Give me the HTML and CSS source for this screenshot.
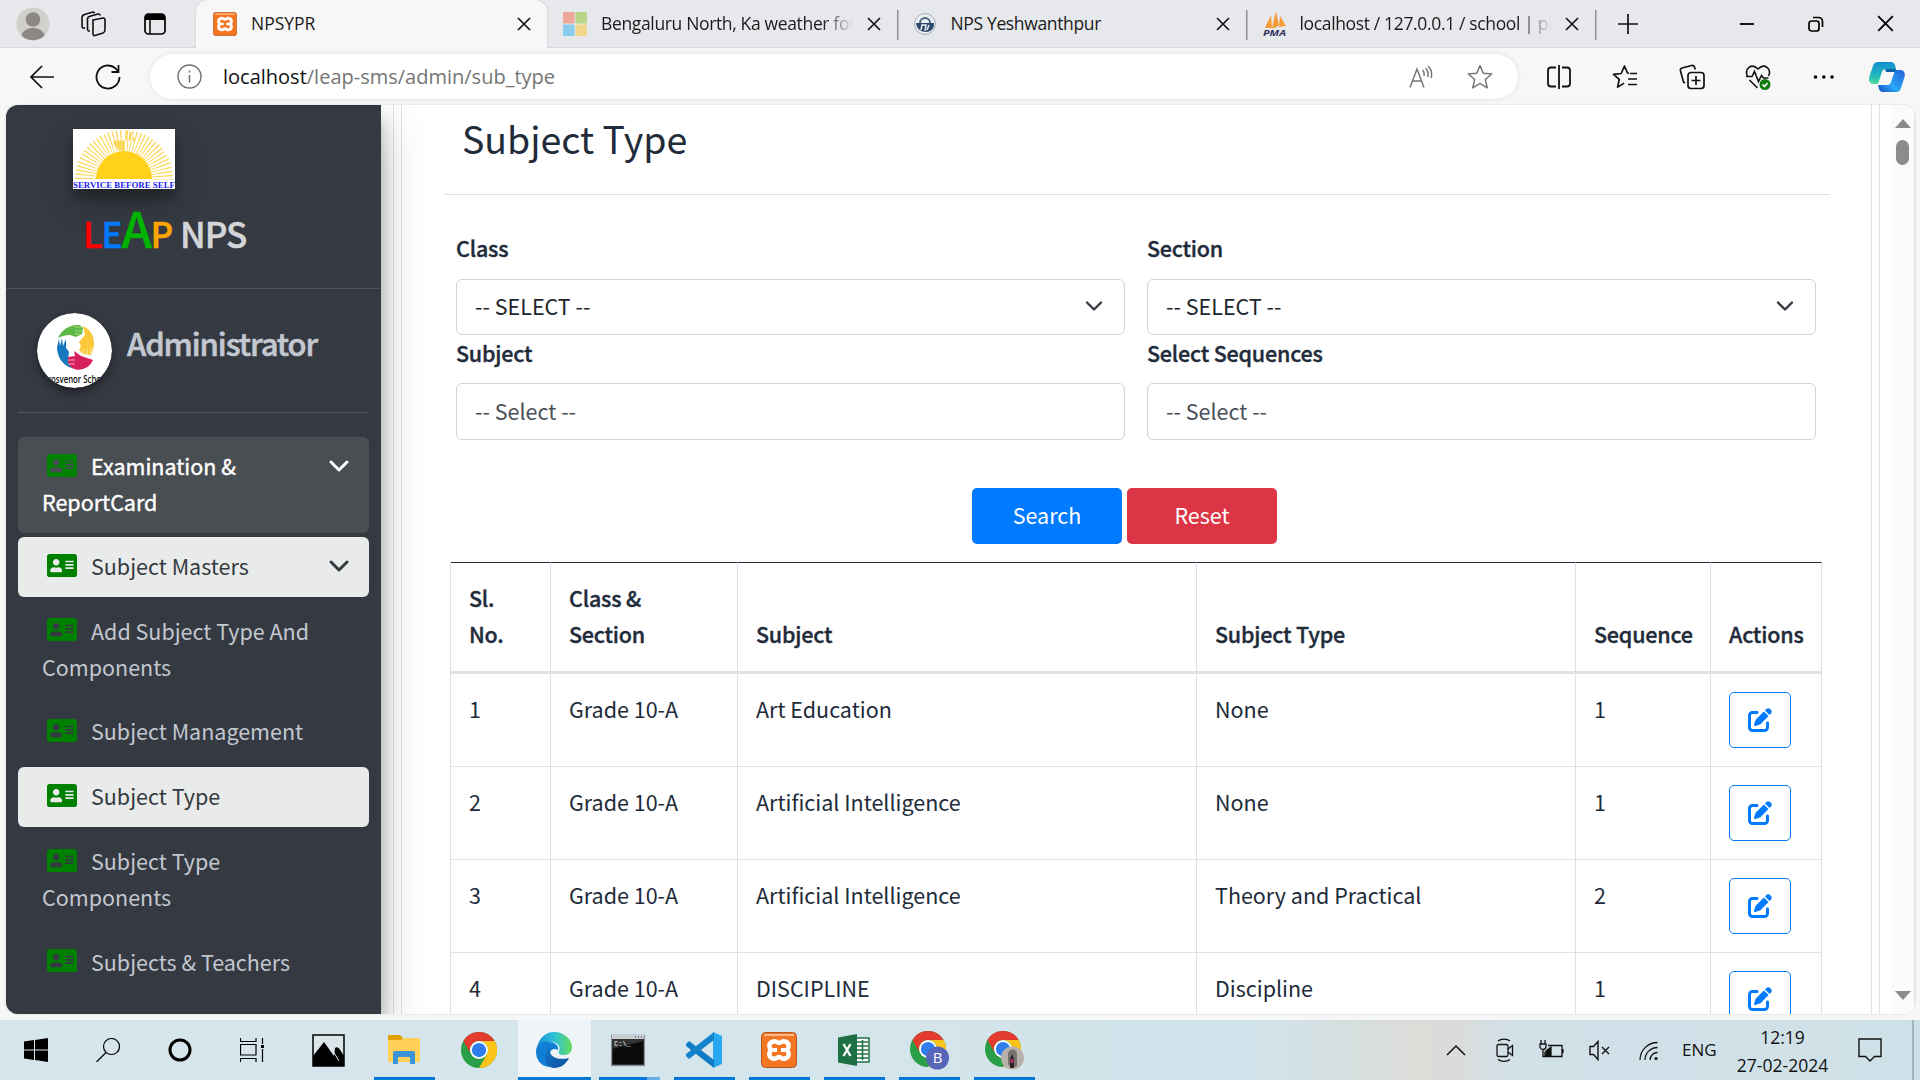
FILE: index.html
```html
<!DOCTYPE html>
<html lang="en">
<head>
<meta charset="utf-8">
<title>NPSYPR</title>
<link rel="stylesheet" href="styles.css">
</head>
<body>
<svg class="defs" width="0" height="0">
  <symbol id="card" viewBox="0 32 576 448"><path d="M528 32H48C21.500 32 0 53.500 0 80v352c0 26.500 21.500 48 48 48h480c26.500 0 48-21.500 48-48V80c0-26.500-21.500-48-48-48zm-352 96c35.300 0 64 28.700 64 64s-28.700 64-64 64-64-28.700-64-64 28.700-64 64-64zm112 236.800c0 10.600-10 19.200-22.400 19.200H86.400C74 384 64 375.400 64 364.800v-19.200c0-31.800 30.100-57.600 67.200-57.600h5c12.300 5.100 25.700 8 39.800 8s27.600-2.900 39.800-8h5c37.100 0 67.200 25.800 67.200 57.600v19.200zM512 312c0 4.400-3.600 8-8 8H360c-4.400 0-8-3.600-8-8v-16c0-4.400 3.600-8 8-8h144c4.400 0 8 3.600 8 8v16zm0-64c0 4.400-3.600 8-8 8H360c-4.400 0-8-3.600-8-8v-16c0-4.400 3.600-8 8-8h144c4.400 0 8 3.600 8 8v16zm0-64c0 4.400-3.600 8-8 8H360c-4.400 0-8-3.600-8-8v-16c0-4.400 3.600-8 8-8h144c4.400 0 8 3.600 8 8v16z" fill="#008000"/></symbol>
  <symbol id="edit" viewBox="0 0 512 512"><path fill="#007bff" d="M471.600 21.700c-21.900-21.900-57.300-21.900-79.200 0L362.300 51.700l97.900 97.900 30.100-30.100c21.900-21.900 21.900-57.300 0-79.200L471.600 21.700zm-299.200 220c-6.100 6.100-10.800 13.600-13.500 21.900l-29.600 88.800c-2.900 8.600-.6 18.100 5.800 24.600s15.900 8.700 24.600 5.800l88.800-29.600c8.200-2.700 15.700-7.400 21.900-13.500L437.700 172.300 339.700 74.300 172.400 241.700zM96 64C43 64 0 107 0 160V416c0 53 43 96 96 96H352c53 0 96-43 96-96V320c0-17.700-14.300-32-32-32s-32 14.300-32 32v96c0 17.700-14.300 32-32 32H96c-17.700 0-32-14.300-32-32V160c0-17.700 14.300-32 32-32h96c17.700 0 32-14.300 32-32s-14.300-32-32-32H96z"/></symbol>
  <symbol id="chev" viewBox="0 0 20 12"><path d="M2 2l8 8 8-8" fill="none" stroke="currentColor" stroke-width="3" stroke-linecap="round" stroke-linejoin="round"/></symbol>
  <symbol id="caret" viewBox="0 0 18 12"><path d="M2 2.500l7 7 7-7" fill="none" stroke="#343a40" stroke-width="2.400" stroke-linecap="round" stroke-linejoin="round"/></symbol>
  <symbol id="close" viewBox="0 0 14 14"><path d="M1 1l12 12M13 1L1 13" fill="none" stroke="#111" stroke-width="1.600"/></symbol>
  <symbol id="xampp" viewBox="0 0 36 36"><rect x=".5" y=".5" width="35" height="35" rx="4" fill="#f37623" stroke="#b9541a"/><path d="M3 3h30" stroke="#ffb98a" stroke-width="2"/><path d="M12 9.500c3-1 4 1.500 6 1.500s3-2.500 6-1.500c5 1.500 4 6 2 8.500 2 2.500 3 7-2 8.500-3 1-4-1.500-6-1.500s-3 2.500-6 1.500c-5-1.500-4-6-2-8.500-2-2.500-3-7 2-8.500z" fill="none" stroke="#fff" stroke-width="4.500"/><path d="M12 18h4M20 18h4" stroke="#fff" stroke-width="4"/></symbol>
  <symbol id="chrome" viewBox="0 0 48 48"><circle cx="24" cy="24" r="24" fill="#2b9f47"/><path d="M3.200 12A24 24 0 0 1 44.800 12H24a12 12 0 0 0-10.400 18z" fill="#e33b2e"/><path d="M44.800 12A24 24 0 0 1 24 48l10.400-18A12 12 0 0 0 24 12z" fill="#fcc419"/><circle cx="24" cy="24" r="12" fill="#fff"/><circle cx="24" cy="24" r="9.500" fill="#2f7cec"/></symbol>
  <linearGradient id="edgeTop" x1="0" x2="1"><stop offset="0" stop-color="#1b8fd2"/><stop offset=".5" stop-color="#2fc1d8"/><stop offset="1" stop-color="#66dc5b"/></linearGradient>
  <linearGradient id="edgeLow" x1="0" y1="0" x2="1" y2="1"><stop offset="0" stop-color="#1277cc"/><stop offset="1" stop-color="#0f4f9c"/></linearGradient>
  <linearGradient id="cpA" x1="0" y1="0" x2="0" y2="1"><stop offset="0" stop-color="#118fd0"/><stop offset=".6" stop-color="#20b6bd"/><stop offset="1" stop-color="#4fdc9b"/></linearGradient>
  <linearGradient id="cpB" x1="1" y1="0" x2="0" y2="1"><stop offset="0" stop-color="#2461d8"/><stop offset=".6" stop-color="#2aa8f5"/><stop offset="1" stop-color="#1746c8"/></linearGradient>
</svg>

<header class="tabstrip">
  <div class="strip-left">
    <svg width="34" height="34" viewBox="0 0 34 34"><circle cx="17" cy="17" r="16.500" fill="#d2d0cd"/><circle cx="17" cy="12.500" r="7.300" fill="#8b8886"/><path d="M5.500 28.500c2-10 21-10 23 0a16.500 16.500 0 0 1-23 0z" fill="#8b8886"/></svg>
    <svg width="26" height="26" viewBox="0 0 26 26" fill="none" stroke="#111" stroke-width="1.600"><path d="M13 9l10-2c1.500 0 2 .8 2 2v10c0 1.500-.7 2.500-2 3l-8 2.500c-1.500.4-2-.5-2-2z"/><path d="M10 20c-1.600.2-2.500-.4-2.500-2V8c0-1.500 1-2.500 2.500-2.800L18 3c1.300-.2 2 .3 2.300 1.500M5 17c-1.800.3-3-.3-3-2V6.500C2 5 3 4 4.500 3.500L12 1.300c1.300-.4 2.300 0 2.700 1"/></svg>
    <svg width="22" height="22" viewBox="0 0 22 22"><rect x="1" y="1" width="20" height="20" rx="3.500" fill="none" stroke="#000" stroke-width="1.700"/><path d="M1 4a3 3 0 0 1 3-3h14a3 3 0 0 1 3 3v3H1z"/><path d="M6 7v14" stroke="#000" stroke-width="1.500"/></svg>
  </div>
  <div class="tab tab-active"><svg width="24" height="24"><use href="#xampp"/></svg><span class="tab-title">NPSYPR</span><svg class="x" width="14" height="14"><use href="#close"/></svg></div>
  <div class="tab"><svg width="24" height="24" viewBox="0 0 24 24"><path d="M0 0h11.500v11.500H0z" fill="#eba89a"/><path d="M12.500 0H24v11.500H12.500z" fill="#b9d589"/><path d="M0 12.500h11.500V24H0z" fill="#89cdee"/><path d="M12.500 12.500H24V24H12.500z" fill="#f1d68b"/></svg><span class="tab-title fade">Bengaluru North, Ka weather for</span><svg class="x" width="14" height="14"><use href="#close"/></svg></div>
  <div class="tab sep"><svg width="24" height="24" viewBox="0 0 24 24"><circle cx="12" cy="12" r="10.500" fill="#e9eef2" stroke="#a7b0ba"/><path d="M3 11h18c1 12-17 12-18 0z" fill="#2f4a6b"/><path d="M7 11a5 5 0 0 1 10 0" fill="none" stroke="#52657c" stroke-width="2"/><path d="M8 18l1-5h4l-1 6M14 18l2-5" stroke="#e9eef2" fill="none" stroke-width="1.500"/></svg><span class="tab-title">NPS Yeshwanthpur</span><svg class="x" width="14" height="14"><use href="#close"/></svg></div>
  <div class="tab sep"><svg class="pma-logo" width="26" height="30" viewBox="0 0 26 30"><path d="M3 19L9 6l1 13zM10 19L14 2l3 14-4 3zM17 18l1-11 6 10z" fill="#f89c3a"/><text x="1" y="27" class="pma" textLength="23" lengthAdjust="spacingAndGlyphs">PMA</text></svg><span class="tab-title fade">localhost / 127.0.0.1 / school | ph</span><svg class="x" width="14" height="14"><use href="#close"/></svg></div>
  <div class="newtab sep"><svg width="22" height="22" viewBox="0 0 22 22"><path d="M11 1v20M1 11h20" stroke="#111" stroke-width="1.700"/></svg></div>
  <div class="winctl">
    <svg width="16" height="16" viewBox="0 0 16 16"><path d="M1 8h14" stroke="#000" stroke-width="1.800"/></svg>
    <svg width="16" height="16" viewBox="0 0 16 16" fill="none" stroke="#000" stroke-width="1.700"><rect x="1" y="5" width="10" height="10" rx="2.500"/><path d="M5 1.500h5.500a4 4 0 0 1 4 4V11"/></svg>
    <svg width="17" height="17" viewBox="0 0 14 14"><path d="M1 1l12 12M13 1L1 13" stroke="#000" stroke-width="1.500"/></svg>
  </div>
</header>

<nav class="toolbar">
  <svg class="back" width="26" height="24" viewBox="0 0 26 24" fill="none" stroke="#111" stroke-width="1.700"><path d="M25 12H2M13 1L2 12l11 11"/></svg>
  <svg class="reload" width="26" height="26" viewBox="0 0 26 26" fill="none" stroke="#111" stroke-width="1.800"><path d="M24.500 13a11.500 11.500 0 1 1-4-8.700L23 7M23.500 1v7h-7"/></svg>
  <div class="address">
    <svg width="25" height="25" viewBox="0 0 25 25"><circle cx="12.500" cy="12.500" r="11.500" fill="none" stroke="#6e6e6e" stroke-width="1.400"/><path d="M12.500 11v7.500M12.500 6.500v2" stroke="#6e6e6e" stroke-width="1.500"/></svg>
    <span class="url"><b>localhost</b>/leap-sms/admin/sub_type</span>
    <svg width="24" height="24" viewBox="0 0 24 24" fill="none" stroke="#767676" stroke-width="1.500"><path d="M1 22.500L8 4l7 18.500M3.500 16h9M13.500 5c1.500 1.600 2 3.500 1.600 6M16.500 3c2.300 2.300 3 5.500 2.200 9M19 1c3.200 3 4.300 7 3.200 12"/></svg>
    <svg width="26" height="26" viewBox="0 0 24 24" fill="none" stroke="#767676" stroke-width="1.400" stroke-linejoin="round"><path d="M12 1.500l3 7 7.800.7-5.900 5.100 1.800 7.700-6.700-4.100L5.300 22l1.800-7.700-5.900-5.100 7.800-.7z"/></svg>
  </div>
  <div class="tools">
    <svg width="26" height="26" viewBox="0 0 26 26" fill="none" stroke="#111" stroke-width="1.800"><path d="M10 3.500H5A3 3 0 0 0 2 6.500v13a3 3 0 0 0 3 3h5M16 3.500h5a3 3 0 0 1 3 3v13a3 3 0 0 1-3 3h-5M13 1v24"/></svg>
    <svg width="26" height="26" viewBox="0 0 26 26" fill="none" stroke="#111" stroke-width="1.700" stroke-linejoin="round"><path d="M17 9.500l-1.500-.5-3-7-3.300 7.500-7.700.8 5.800 5-1.700 7.800 6.500-4M18 9.500h7M16 15h9M16 20.500h9"/></svg>
    <svg width="26" height="26" viewBox="0 0 26 26" fill="none" stroke="#111" stroke-width="1.700"><rect x="9" y="8.500" width="16" height="16" rx="3"/><path d="M17 12v9M12.500 16.500h9M6 19l-1.500-1-3-11C1 5.500 1.700 4.300 3 4L12.500 1.500c1.500-.3 2.500.4 3 1.700l.8 2.300"/></svg>
    <svg width="26" height="26" viewBox="0 0 26 26" fill="none" stroke="#111" stroke-width="1.600"><path d="M2.500 12C-1 5 6.500-1.500 13 5c6.500-6.500 14 0 10.500 7M4.500 16l8 8M1 12.500h6l2.500-5 4 10 3-6 2 2.500h5"/><circle cx="20" cy="20.500" r="5.500" fill="#107c10" stroke="none"/><path d="M17.500 20.500l2 2 3-3.500" stroke="#fff"/></svg>
    <svg width="26" height="26" viewBox="0 0 26 26"><circle cx="4.500" cy="13" r="1.800"/><circle cx="12.800" cy="13" r="1.800"/><circle cx="21" cy="13" r="1.800"/></svg>
    <svg width="36" height="32" viewBox="0 0 36 32"><path d="M9 1h13c3 0 4 2 5 7H17c-3 0-4 2-5 6l-3 9H4c-4 0-4.500-4-3.500-8L4 5c1-3 2.500-4 5-4z" fill="url(#cpA)"/><path d="M27 31H14c-3 0-4-2-5-7h9c3 0 4-2 5-6l3-9h5c4 0 5.500 3 4.500 7L32 27c-1 3-2.500 4-5 4z" fill="url(#cpB)"/><path d="M16 8h11l-1 3h-9z" fill="#0c62a8"/></svg>
  </div>
</nav>

<main class="viewport">
  <aside class="sidebar">
    <div class="brand">
      <svg class="logo" width="102" height="60" viewBox="0 0 102 60"><path d="M0 0h102v60H0z" fill="#fff"/><circle cx="51" cy="50" r="38.500" fill="none" stroke="#fbd75e" stroke-width="21" pathLength="360" stroke-dasharray="1.700 3.300"/><path d="M23 50a28 28 0 0 1 56 0z" fill="#ffd11a"/><path d="M0 50.500h102V60H0z" fill="#fff"/><text x="0" y="59.300" class="motto" textLength="102" lengthAdjust="spacingAndGlyphs">SERVICE BEFORE SELF</text></svg>
      <div class="name"><span class="l">L</span><span class="e">E</span><span class="a">A</span><span class="p">P</span> NPS</div>
    </div>
    <div class="user">
      <svg class="avatar" width="75" height="75" viewBox="0 0 75 75"><clipPath id="rd"><circle cx="37.500" cy="37.500" r="37.500"/></clipPath><circle cx="37.500" cy="37.500" r="37.500" fill="#fff"/><path d="M21 25c3-8 12-14 22-13l3 3-1 6-6 3-6-2c-4 0-8 1-12 3z" fill="#5cb947"/><path d="M38 14h7M38 18h7M38 21h6" stroke="#a8db76" stroke-width="1"/><path d="M46 13c8 3 12 12 11 20l-3 9-8-1-4-4 2-4-2-4 6-7z" fill="#fbc93a"/><path d="M46 36v6M50 36v6M54 35v6" stroke="#fff3c0" stroke-width=".8"/><path d="M20 34l2-8 1 7 2-8 1 8 3-7 0 9 3 4-1 7 4 9c-9-2-15-11-15-21z" fill="#1679be"/><path d="M31 44l7-1-1-5 7 5 12 4c-4 9-14 12-21 8l-4-5z" fill="#d71f5b"/><path d="M31 47h7M31 51h7" stroke="#f6a9c1" stroke-width="1"/><g clip-path="url(#rd)"><text x="5" y="69.500" class="school" textLength="66" lengthAdjust="spacingAndGlyphs">Grosvenor School</text></g></svg>
      <span class="role">Administrator</span>
    </div>
    <ul class="menu">
      <li class="parent"><svg class="ic"><use href="#card"/></svg>Examination &amp; ReportCard<svg class="arrow"><use href="#chev"/></svg></li>
      <li class="on"><svg class="ic"><use href="#card"/></svg>Subject Masters<svg class="arrow"><use href="#chev"/></svg></li>
      <li><svg class="ic"><use href="#card"/></svg>Add Subject Type And Components</li>
      <li><svg class="ic"><use href="#card"/></svg>Subject Management</li>
      <li class="on"><svg class="ic"><use href="#card"/></svg>Subject Type</li>
      <li><svg class="ic"><use href="#card"/></svg>Subject Type<br>Components</li>
      <li><svg class="ic"><use href="#card"/></svg>Subjects &amp; Teachers</li>
    </ul>
  </aside>
  <div class="content">
    <section class="panel">
      <h1>Subject Type</h1>
      <form class="filters">
        <div><label>Class</label><div class="field sel">-- SELECT --<svg width="18" height="12"><use href="#caret"/></svg></div></div>
        <div><label>Section</label><div class="field sel">-- SELECT --<svg width="18" height="12"><use href="#caret"/></svg></div></div>
        <div><label>Subject</label><div class="field multi">-- Select --</div></div>
        <div><label>Select Sequences</label><div class="field multi">-- Select --</div></div>
      </form>
      <div class="buttons"><span class="btn blue">Search</span><span class="btn red">Reset</span></div>
      <table>
        <colgroup><col class="c1"><col class="c2"><col class="c3"><col class="c4"><col class="c5"><col class="c6"></colgroup>
        <thead><tr><th>Sl.<br>No.</th><th>Class &amp;<br>Section</th><th>Subject</th><th>Subject Type</th><th>Sequence</th><th>Actions</th></tr></thead>
        <tbody>
          <tr><td>1</td><td>Grade 10-A</td><td>Art Education</td><td>None</td><td>1</td><td><span class="act"><svg width="24" height="24"><use href="#edit"/></svg></span></td></tr>
          <tr><td>2</td><td>Grade 10-A</td><td>Artificial Intelligence</td><td>None</td><td>1</td><td><span class="act"><svg width="24" height="24"><use href="#edit"/></svg></span></td></tr>
          <tr><td>3</td><td>Grade 10-A</td><td>Artificial Intelligence</td><td>Theory and Practical</td><td>2</td><td><span class="act"><svg width="24" height="24"><use href="#edit"/></svg></span></td></tr>
          <tr><td>4</td><td>Grade 10-A</td><td>DISCIPLINE</td><td>Discipline</td><td>1</td><td><span class="act"><svg width="24" height="24"><use href="#edit"/></svg></span></td></tr>
        </tbody>
      </table>
    </section>
  </div>
  <div class="scrollbar">
    <svg width="16" height="9" viewBox="0 0 16 9"><path d="M8 0l8 9H0z" fill="#8b8b8b"/></svg>
    <i class="thumb"></i>
    <svg class="down" width="16" height="9" viewBox="0 0 16 9"><path d="M0 0h16L8 9z" fill="#8b8b8b"/></svg>
  </div>
</main>

<footer class="taskbar">
  <div class="sys">
    <svg width="24" height="24" viewBox="0 0 24 24"><path d="M0 3.500l10-1.400v9.400H0zM11 2l13-2v11.500H11zM0 12.500h10v9.400L0 20.500zM11 12.500h13V24l-13-2z"/></svg>
    <svg width="24" height="24" viewBox="0 0 24 24" fill="none" stroke="#000" stroke-width="1.200"><circle cx="15.500" cy="8.500" r="8"/><path d="M10 14.500L.5 24"/></svg>
    <svg width="24" height="24" viewBox="0 0 24 24"><circle cx="12" cy="12" r="10" fill="none" stroke="#000" stroke-width="3"/></svg>
    <svg width="24" height="24" viewBox="0 0 24 24" fill="none" stroke="#000" stroke-width="1.200"><path d="M.5 0v3.500h15.500V0M.5 24v-3.500h15.500V24M.5 6.500h15.500v10.500H.500zM22.500 0v6M22.500 11v13"/><path d="M21 7h3v3h-3z" fill="#000" stroke="none"/></svg>
  </div>
  <div class="apps">
    <div class="app plain"><svg width="33" height="33" viewBox="0 0 33 33"><path d="M1 1h31v31H1z" fill="#dbe6ea" stroke="#000" stroke-width="1.500"/><path d="M1 22L12 8l10 14 1-8c3-3 6 3 9 8v10H1z"/><path d="M21 17l6 10" stroke="#dbe6ea"/></svg></div>
    <div class="app run"><svg width="32" height="32" viewBox="0 0 32 32"><path d="M0 1h12l3 3-3 6H0z" fill="#dfa000"/><path d="M0 6h13l3-2h16v22a2 2 0 0 1-2 2H2a2 2 0 0 1-2-2z" fill="#ffd257"/><path d="M5 30V19a2 2 0 0 1 2-2h18a2 2 0 0 1 2 2v11h-5v-7H10v7z" fill="#3b94da"/></svg></div>
    <div class="app"><svg width="36" height="36"><use href="#chrome"/></svg></div>
    <div class="app run active"><svg width="36" height="36" viewBox="0 0 36 36"><path d="M1 17C2 6 10 0 18 0c11 0 18 8 18 15 0 6-4 8-8 8-5 0-6-2-5-4 2-4-1-9-9-9S2 14 1 17z" fill="url(#edgeTop)"/><path d="M0 19c0-7 7-10 13-9 6 0 10 4 9 8-6-3-9 2-8 6 1 7 8 9 14 8-4 4-28 8-28-13z" fill="#0f7fd6"/><path d="M14 15c-2 9 6 14 19 11-3 6-8 10-15 10-9-1-13-14-4-21z" fill="url(#edgeLow)"/></svg></div>
    <div class="app run stack"><svg width="34" height="36" viewBox="0 0 34 36"><path d="M.5 3.500h33v30H.500z" fill="#0a0a0a" stroke="#8a8f94" stroke-width="1.500"/><path d="M1 3h32v4H1z" fill="#c9ced2"/><path d="M24 5h1M27 5h1M30 5h1" stroke="#234"/><path d="M1 17L33 9V7H1z" fill="#333"/><text x="3" y="14" class="prompt">C:\_</text></svg></div>
    <div class="app run"><svg width="36" height="36" viewBox="0 0 36 36"><path d="M27 0l9 4v28l-9 4z" fill="#28a8f0"/><path d="M0 12l3-3 25 19v8L0 14z" fill="#0f7bc4"/><path d="M0 24l3 3L28 8V0L0 22z" fill="#1583cb"/></svg></div>
    <div class="app run"><svg width="36" height="36"><use href="#xampp"/></svg></div>
    <div class="app run"><svg width="32" height="32" viewBox="0 0 32 32"><path d="M18 4h13v24H18z" fill="#fff" stroke="#1d7044" stroke-width="1.500"/><path d="M19 8h11M19 12h11M19 16h11M19 20h11M19 24h11M24.500 6v20" stroke="#1d7044" stroke-width="1.600"/><path d="M0 3.500L19 0v32L0 28.500z" fill="#1d7044"/><path d="M5.500 10l7 12M12.500 10l-7 12" stroke="#fff" stroke-width="2.300"/></svg></div>
    <div class="app run"><svg width="40" height="40" viewBox="0 0 40 40"><use href="#chrome" x="1" y="1" width="36" height="36"/><circle cx="28.500" cy="28" r="11.500" fill="#5765b9"/><text x="28.500" y="33" class="badge" text-anchor="middle">B</text></svg></div>
    <div class="app run"><svg width="40" height="40" viewBox="0 0 40 40"><use href="#chrome" x="1" y="1" width="36" height="36"/><circle cx="28.500" cy="28" r="11.500" fill="#b7b1ac"/><path d="M24 34V24c0-6 9-6 9 0v12c-3 2-7 2-9-2z" fill="#77716f"/><path d="M26 38v-9l2-5 2 5v9z" fill="#2b2328"/><path d="M26.500 29h3v4h-3z" fill="#b02b63"/></svg></div>
  </div>
  <div class="tray">
    <svg width="48" height="26" viewBox="-15 -4 48 26" fill="none" stroke="#111" stroke-width="1.500"><path d="M0 14l9-9 9 9"/></svg>
    <svg width="48" height="26" viewBox="-16 -1 48 26" fill="none" stroke="#111" stroke-width="1.300"><rect x="1" y="6.500" width="11" height="12" rx="1.500"/><path d="M12 11l4.500-3.500v10L12 14M2 3c3-2.500 9-2.500 12 0M2 21.500c3 2.500 9 2.500 12 0"/></svg>
    <svg width="48" height="26" viewBox="-12 -2 48 26" fill="none" stroke="#111" stroke-width="1.300"><path d="M8 6.500h14v11H5v-5M23 10v4M1 1v4M5 1v4M0 5h6v2.500a3 3 0 0 1-6 0zM3 11v6.500h2"/><path d="M6 16.500V12l5-4v8.500z" fill="#111"/></svg>
    <svg width="48" height="26" viewBox="-13 -2 48 26" fill="none" stroke="#111" stroke-width="1.400"><path d="M1 7.500h3.500l4.500-5v18l-4.500-5H1zM13 8l7 7M20 8l-7 7"/></svg>
    <svg width="48" height="26" viewBox="-15 -2 48 26" fill="none" stroke="#111" stroke-width="1.300"><path d="M1 21A17.500 17.500 0 0 1 18.500 3.500M6 21A12.500 12.500 0 0 1 18.500 8.500M11 21a7.500 7.500 0 0 1 7.500-7.500"/><circle cx="17" cy="19.500" r="1.600" fill="#111" stroke="none"/></svg>
    <span class="lang">ENG</span>
    <div class="clock"><span>12:19</span><span class="date">27-02-2024</span></div>
    <svg width="24" height="24" viewBox="0 0 24 24" fill="none" stroke="#111" stroke-width="1.400"><path d="M1 1h22v17.500h-6.500L12 23l-4.500-4.500H1z"/></svg>
    <i class="peek"></i>
  </div>
</footer>
</body>
</html>
```
FILE: styles.css
```css
* { box-sizing: border-box; }
body {
  margin: 0;
  width: 1920px;
  height: 1080px;
  overflow: hidden;
  display: flex;
  flex-direction: column;
  background: #f7f7f7;
  font-family: "Noto Sans CJK SC", "Noto Sans", sans-serif;
  font-size: 21.5px;
  line-height: 36px;
  color: #212b3a;
}
svg { flex: none; display: block; }
.defs { position: absolute; }

/* browser tabs */
.tabstrip, .toolbar, .taskbar { font-family: "Open Sans", "Noto Sans", sans-serif; }
.tabstrip {
  height: 48px;
  flex: none;
  display: flex;
  background: #e6e8eb;
  border-bottom: 1px solid #d5d8dc;
  font-size: 17.500px;
  color: #1b1b1b;
}
.strip-left { width: 196px; display: flex; align-items: center; padding-left: 16px; gap: 30px; }
.strip-left svg:last-child { margin-left: 8px; }
.tab { display: flex; align-items: center; width: 349.500px; padding: 0 16px; }
.tab-active { width: 351px; background: #f7f7f7; border-radius: 12px 12px 0 0; height: 48px; box-shadow: 0 0 2px #b9bcc2; clip-path: inset(0 -3px 0 -3px); padding: 0 16px 0 17px; }
.tab-title { flex: 1; margin: 0 14px 0 14px; overflow: hidden; white-space: nowrap; line-height: 34px; height: 36px; letter-spacing: -0.350px; }
.tab-active .tab-title { letter-spacing: 0; }
.fade { -webkit-mask-image: linear-gradient(90deg, #000 88%, transparent); mask-image: linear-gradient(90deg, #000 88%, transparent); }
.sep { background: linear-gradient(#8c8f93, #8c8f93) 0 10px / 1.500px 30px no-repeat; }
.tab.sep { width: 349px; }
.pma-logo { margin-right: -2px; }
.pma { font: italic bold 9.500px "Open Sans", sans-serif; fill: #33345e; }
.newtab { width: 66px; display: flex; align-items: center; justify-content: center; }
.winctl { flex: 1; display: flex; align-items: center; justify-content: flex-end; gap: 53px; padding-right: 26px; }

/* address bar */
.toolbar { height: 57px; flex: none; display: flex; align-items: center; padding-left: 29px; }
.reload { margin-left: 40px; }
.address {
  margin-left: 29px;
  width: 1368px;
  height: 45px;
  border-radius: 23px;
  background: #fff;
  box-shadow: 0 0 5px rgba(0, 0, 0, .1);
  display: flex;
  align-items: center;
  padding: 0 25px 0 27px;
}
.url { flex: 1; margin-left: 21px; font-size: 20px; color: #757575; letter-spacing: 0; }
.url b { font-weight: 400; color: #111; }
.address svg:last-child { margin-left: 34px; }
.tools { display: flex; align-items: center; gap: 40.300px; margin-left: 28px; }
.tools svg:last-child { margin-left: -8px; }

/* page */
.viewport {
  width: 1909px;
  height: 909px;
  flex: none;
  margin-left: 6px;
  background: #fff;
  border-radius: 12px;
  overflow: hidden;
  display: flex;
  box-shadow: 0 0 2px #c9c9c9;
}
.sidebar {
  width: 375px;
  flex: none;
  background: #353941;
  position: relative;
  z-index: 1;
  box-shadow: 0 21px 42px rgba(0, 0, 0, .25), 0 15px 15px rgba(0, 0, 0, .22);
}
.brand { height: 184px; border-bottom: 1px solid #4b545c; padding: 24px 0 0 67px; }
.logo { box-shadow: 0 15px 30px rgba(0, 0, 0, .19), 0 9px 9px rgba(0, 0, 0, .23); }
.motto { font: bold 9px "Liberation Serif", serif; fill: #2222f0; }
.name { margin: 18px 0 0 10px; font-size: 35px; line-height: 48px; font-weight: 500; color: #d3d5d8; letter-spacing: -1px; word-spacing: 1px; white-space: nowrap; -webkit-text-stroke: .5px; }
.l { color: #f00; }
.e { color: #007bff; }
.a { color: #00b300; font-size: 49px; line-height: 40px; letter-spacing: -1.500px; }
.p { color: #ffa500; }
.user { margin: 0 12px; height: 124px; border-bottom: 1px solid #4f5962; display: flex; padding: 24px 0 0 19px; }
.avatar { border-radius: 50%; box-shadow: 0 5px 9px rgba(0, 0, 0, .4); }
.school { font: 600 10.500px "Open Sans", sans-serif; fill: #111; }
.role { margin-left: 15px; margin-top: 12px; font-size: 31px; font-weight: 500; color: #c2c7d0; letter-spacing: -1.100px; -webkit-text-stroke: .6px; }
.menu { list-style: none; margin: 24px 12px 0; padding: 0; display: flex; flex-direction: column; gap: 4.800px; }
.menu li { position: relative; padding: 11px 36px 13px 24px; border-radius: 6px; color: #c2c7d0; }
.menu .parent { background: #494e52; color: #fff; margin-bottom: -1px; -webkit-text-stroke: .4px; padding-right: 90px; }
.menu .on { background: #e9ebea; color: #343a40; }
.ic { display: inline-block; width: 30px; height: 23.300px; margin: 0 14px 0 5px; vertical-align: -2px; }
.arrow { position: absolute; right: 20px; top: 23px; width: 20px; height: 12px; }

.content { flex: 1; border-left: 1px solid #dee2e6; margin: 0 11px 0 12px; border-right: 1px solid #dee2e6; padding: 0 7px; }
.panel { height: 100%; border: solid #dee2e6; border-width: 0 1px; padding: 0 41px 0 42px; }
h1 { margin: 0 0 32px; height: 90px; padding: 9px 0 0 18px; border-bottom: 1px solid #dcdfe6; font-size: 37.500px; line-height: 48px; font-weight: 400; }
.filters { display: grid; grid-template-columns: 669px 669px; column-gap: 22px; padding-left: 12px; }
label { display: block; height: 52px; line-height: 42px; font-weight: 500; letter-spacing: -0.200px; -webkit-text-stroke: .35px; }
.filters div:nth-child(n+3) label { height: 48px; line-height: 35px; }
.field { height: 56px; border: 1px solid #ced4da; border-radius: 6px; padding: 0 21px 2px 18px; display: flex; align-items: center; justify-content: space-between; color: #212529; }
.multi { height: 57px; color: #495057; }
.buttons { display: flex; gap: 5px; margin: 48px 0 18px 528px; }
.btn { width: 150px; height: 56px; line-height: 54px; text-align: center; border-radius: 5px; color: #fff; }
.blue { background: #007bff; }
.red { background: #dc3545; }
table { margin-left: 6px; width: 1372px; table-layout: fixed; border-collapse: separate; border-spacing: 0; border-left: 1px solid #dee2e6; }
.c1 { width: 100px; }
.c2 { width: 187px; }
.c3 { width: 459px; }
.c4 { width: 379px; }
.c5 { width: 135px; }
.c6 { width: 111px; }
th, td { text-align: left; border-right: 1px solid #dee2e6; padding: 0 0 0 18px; white-space: nowrap; }
th { height: 112px; border-top: 1px solid #212b3a; border-bottom: 3px solid #dee2e6; vertical-align: bottom; padding-bottom: 19px; font-weight: 500; letter-spacing: -0.200px; -webkit-text-stroke: .35px; }
td { height: 93px; border-bottom: 1px solid #dee2e6; vertical-align: top; padding-top: 17px; }
.act { display: flex; align-items: center; justify-content: center; width: 62px; height: 56px; margin-top: 1px; border: 1px solid #007bff; border-radius: 5px; }
.scrollbar { width: 24px; background: #fbfbfb; border-right: 1px solid #e3e3e3; display: flex; flex-direction: column; align-items: center; padding: 14px 0 14px; }
.thumb { width: 13px; height: 25px; margin-top: 12px; border-radius: 7px; background: #8b8b8b; }
.down { margin-top: auto; }

/* Windows taskbar */
.taskbar {
  height: 60px;
  flex: none;
  margin-top: 6px;
  display: flex;
  background: linear-gradient(90deg, #d7e6ec 0, #d2e4eb 1250px, #d5dfe0 1340px, #dcdcd8 1420px, #d9dcda 1460px, #d2e0e8 1510px, #cfe1e8 1920px);
  color: #111;
}
.sys { display: flex; align-items: center; gap: 48px; padding-left: 24px; width: 291px; }
.apps { display: flex; flex: 1; }
.app { width: 75px; display: flex; align-items: center; justify-content: center; padding-right: 2px; }
.plain { width: 76px; }
.run { background: linear-gradient(#0078d7, #0078d7) 50% 100% / 61px 3px no-repeat; }
.app.active { background: linear-gradient(#0078d7, #0078d7) 50% 100% / 73px 3px no-repeat, linear-gradient(90deg, transparent 1px, #eff4f8 1px, #eff4f8 74px, transparent 74px); }
.app.stack { padding-right: 4px; background: linear-gradient(90deg, #0078d7 48px, #69aee5 48px) 50% 100% / 61px 3px no-repeat; }
.prompt { font: 7px "Liberation Mono", monospace; fill: #fff; }
.badge { font: 15px "Open Sans", sans-serif; fill: #fff; }
.tray { display: flex; align-items: center; width: 488px; }
.lang { margin-left: 10px; width: 40px; font-size: 17px; }
.clock { width: 124px; height: 60px; display: flex; flex-direction: column; align-items: center; font-size: 17.500px; line-height: 28px; padding: 3px 3px 0 0; white-space: nowrap; }
.tray > svg:nth-of-type(6) { margin-left: 12px; }
.peek { margin-left: 30px; height: 60px; border-left: 2px solid #a3b3bd; }
```
